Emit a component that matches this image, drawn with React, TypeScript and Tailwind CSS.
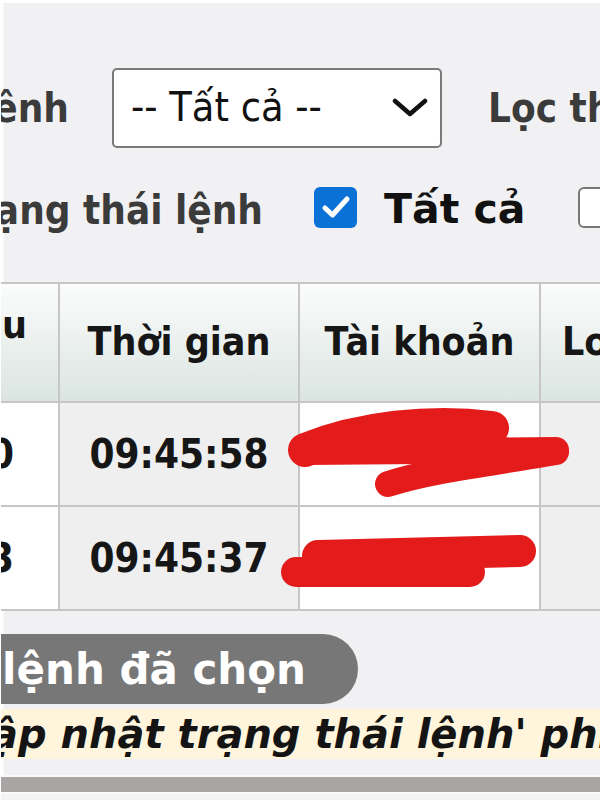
import React from "react";

const F = { fontFamily: '"DejaVu Sans Condensed", "DejaVu Sans", Verdana, sans-serif' } as React.CSSProperties;
const W = { fontFamily: '"DejaVu Sans", Verdana, sans-serif' } as React.CSSProperties;

function Chevron() {
  return (
    <svg width="36" height="20" viewBox="0 0 36 20" className="shrink-0">
      <path d="M3 3 L18 16 L33 3" fill="none" stroke="#111" strokeWidth="4.5" strokeLinecap="round" strokeLinejoin="round" />
    </svg>
  );
}

export default function App() {
  return (
    <div className="relative w-[600px] h-[800px] overflow-hidden bg-white" style={F}>
      <div className="mt-[3px] ml-[3px] h-[797px] flex flex-col bg-[#f1f1f3] border-l border-[#f8f8f9]">
        {/* row 1 */}
        <div className="flex items-center mt-[65px] h-[80px] -ml-[3px]">
          <div className="w-[68px] overflow-hidden flex justify-end whitespace-nowrap text-[40px] font-bold text-[#3b3b3b] shrink-0">
            Kênh
          </div>
          <div className="ml-[43px] w-[330px] h-[80px] bg-white border-2 border-[#7a7a7a] rounded-[5px] flex items-center justify-between pl-[17px] pr-[12px] shrink-0">
            <span className="text-[41px] text-[#111] whitespace-nowrap">-- Tất cả --</span>
            <Chevron />
          </div>
          <div className="ml-[46px] whitespace-nowrap text-[40px] font-bold text-[#3b3b3b]">Lọc thời gian</div>
        </div>
        {/* row 2 */}
        <div className="flex items-center mt-[33px] h-[52px] -ml-[3px]">
          <div className="w-[262px] overflow-hidden flex justify-end whitespace-nowrap text-[40px] font-bold text-[#3b3b3b] shrink-0 pt-[6px]">
            Trạng thái lệnh
          </div>
          <div className="ml-[51px] w-[43px] h-[41px] rounded-[6px] bg-[#0a72d6] flex items-center justify-center shrink-0">
            <svg width="30" height="26" viewBox="0 0 30 26">
              <path d="M4 14 L11.5 21 L26 5" fill="none" stroke="#fff" strokeWidth="5" strokeLinecap="round" strokeLinejoin="round" />
            </svg>
          </div>
          <div className="ml-[27px] whitespace-nowrap text-[41px] font-bold text-[#111] shrink-0 pt-[6px]" style={W}>Tất cả</div>
          <div className="ml-[53px] w-[43px] h-[41px] rounded-[6px] bg-white border-2 border-[#777] shrink-0" />
        </div>
        {/* table */}
        <div className="mt-[49px] -ml-[3px] flex flex-col border-t-2 border-[#c6c6c6]">
          <div className="flex h-[119px] border-b-2 border-[#c6c6c6] bg-gradient-to-b from-[#fbfcfc] to-[#dbe5e0] text-[39px] font-bold text-[#161616]">
            <div className="w-[59px] shrink-0 border-r-2 border-[#c6c6c6] overflow-hidden flex justify-end items-start pt-[12px] pr-[31px] whitespace-nowrap">Số hiệu</div>
            <div className="w-[240px] shrink-0 border-r-2 border-[#c6c6c6] flex items-center justify-center whitespace-nowrap">Thời gian</div>
            <div className="w-[241px] shrink-0 border-r-2 border-[#c6c6c6] flex items-center justify-center whitespace-nowrap">Tài khoản</div>
            <div className="flex-1 flex items-center pl-[21px] whitespace-nowrap overflow-hidden">Loại lệnh</div>
          </div>
          {[
            { a: "1230", t: "09:45:58" },
            { a: "1233", t: "09:45:37" },
          ].map((r, i) => (
            <div key={i} className="flex h-[104px] border-b-2 border-[#c6c6c6] text-[40px] font-bold text-[#161616]">
              <div className="w-[59px] shrink-0 bg-white border-r-2 border-[#c6c6c6] overflow-hidden flex justify-end items-center pr-[44px] whitespace-nowrap">{r.a}</div>
              <div className="w-[240px] shrink-0 bg-[#efefef] border-r-2 border-[#c6c6c6] flex items-center justify-center whitespace-nowrap">{r.t}</div>
              <div className="w-[241px] shrink-0 bg-white border-r-2 border-[#c6c6c6] flex items-center justify-center whitespace-nowrap">
                {i === 0 ? <span className="ml-[-40px]">·· </span> : null}
              </div>
              <div className="flex-1 bg-[#efefef]" />
            </div>
          ))}
        </div>
        {/* button */}
        <div className="mt-[23px] -ml-[3px] w-[357px] h-[70px] bg-[#777777] rounded-r-full overflow-hidden flex justify-end items-center pr-[52px] whitespace-nowrap text-[42px] font-bold text-white" style={W}>
          Cập nhật lệnh đã chọn
        </div>
        {/* note */}
        <div className="mt-[5px] -ml-[3px] h-[50px] bg-[#fff5dc] flex items-center overflow-hidden whitespace-nowrap text-[40px] font-bold italic text-[#141414]" style={W}>
          <span className="ml-[-10px]">ập nhật trạng thái lệnh' phiên</span>
        </div>
        <div className="mt-[16px] -ml-[3px] h-[2px] bg-[#fafafa]" />
        <div className="-ml-[3px] h-[15px] bg-[#a9a5a5]" />
        <div className="-ml-[3px] h-[2px] bg-[#fbfbfb]" />
        <div className="-ml-[3px] flex-1 bg-[#f4f4f6]" />
      </div>
      {/* redaction scribbles */}
      <svg className="absolute left-0 top-0 pointer-events-none" width="600" height="800" viewBox="0 0 600 800">
        <g fill="none" stroke="#e41b1b" strokeLinecap="round" strokeLinejoin="round">
          <path d="M305 450 C 360 428, 430 420, 492 428" strokeWidth="34" />
          <path d="M305 452 L 556 450" strokeWidth="26" />
          <path d="M388 484 C 430 470, 500 462, 556 452" strokeWidth="26" />
          <path d="M318 556 L 520 551" strokeWidth="32" />
          <path d="M296 572 L 470 572" strokeWidth="30" />
        </g>
      </svg>
    </div>
  );
}
